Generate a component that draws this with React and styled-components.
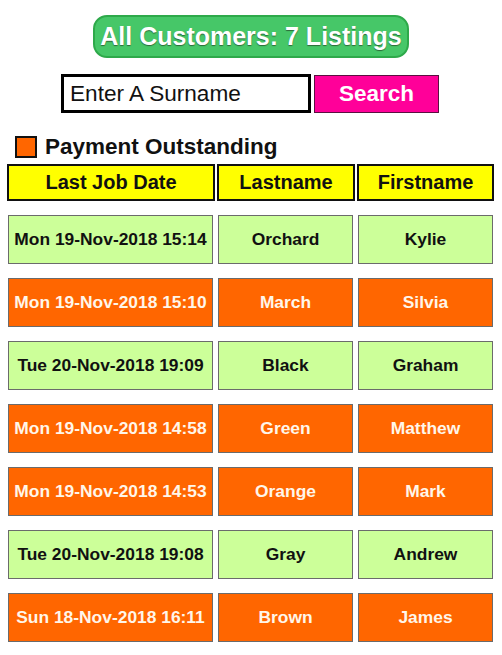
import React, { useState } from 'react';
import styled, { createGlobalStyle } from 'styled-components';

const GlobalStyle = createGlobalStyle`
    body {
        margin: 0;
        background: #ffffff;
        font-family: "Liberation Sans", Arial, sans-serif;
    }
`;

const customers = [
    { date: 'Mon 19-Nov-2018 15:14', last: 'Orchard', first: 'Kylie', owing: false },
    { date: 'Mon 19-Nov-2018 15:10', last: 'March', first: 'Silvia', owing: true },
    { date: 'Tue 20-Nov-2018 19:09', last: 'Black', first: 'Graham', owing: false },
    { date: 'Mon 19-Nov-2018 14:58', last: 'Green', first: 'Matthew', owing: true },
    { date: 'Mon 19-Nov-2018 14:53', last: 'Orange', first: 'Mark', owing: true },
    { date: 'Tue 20-Nov-2018 19:08', last: 'Gray', first: 'Andrew', owing: false },
    { date: 'Sun 18-Nov-2018 16:11', last: 'Brown', first: 'James', owing: true },
];

const Page = styled.div`
    width: 502px;
    padding-top: 15px;
    box-sizing: border-box;
`;

const TitlePill = styled.div`
    width: 316px;
    height: 43px;
    margin: 0 auto;
    box-sizing: border-box;
    border: 2px solid #2ea94a;
    border-radius: 14px;
    background: #46c768;
    color: #ffffff;
    font-size: 25px;
    font-weight: bold;
    display: flex;
    align-items: center;
    justify-content: center;
    text-shadow: 0 1px 1px #2b6a38;
`;

const SearchRow = styled.div`
    display: flex;
    align-items: flex-start;
    gap: 3px;
    margin-top: 16px;
    padding-left: 61px;
`;

const SurnameInput = styled.input`
    width: 250px;
    height: 39px;
    box-sizing: border-box;
    border: 3px solid #000000;
    padding: 0 6px;
    font-family: "Liberation Sans", Arial, sans-serif;
    font-size: 22.6px;
    color: #000000;
    outline: none;
    &::placeholder {
        color: #111111;
        opacity: 1;
    }
`;

const SearchButton = styled.button`
    width: 125px;
    height: 38px;
    margin-top: 1px;
    box-sizing: border-box;
    border: 1px solid #5a1040;
    background: #ff0099;
    color: #ffffff;
    font-family: "Liberation Sans", Arial, sans-serif;
    font-size: 22.5px;
    font-weight: bold;
    padding: 0;
`;

const Legend = styled.div`
    display: flex;
    align-items: center;
    gap: 8px;
    height: 22px;
    line-height: 22px;
    margin-top: 23px;
    padding-left: 15px;
    font-size: 22.5px;
    font-weight: bold;
    color: #111111;
`;

const Swatch = styled.span`
    width: 22px;
    height: 22px;
    box-sizing: border-box;
    border: 2px solid #111111;
    background: #ff6600;
`;

const HeaderGrid = styled.div`
    display: grid;
    grid-template-columns: 208px 138px 137px;
    gap: 2px;
    margin-top: 6px;
    padding-left: 7px;
`;

const HeaderCell = styled.div`
    height: 37px;
    box-sizing: border-box;
    border: 2px solid #111111;
    background: #ffff00;
    color: #111111;
    font-size: 20px;
    font-weight: bold;
    display: flex;
    align-items: center;
    justify-content: center;
`;

const Rows = styled.div`
    display: flex;
    flex-direction: column;
    gap: 14px;
    margin-top: 14px;
    padding-left: 8px;
`;

const Row = styled.div`
    display: grid;
    grid-template-columns: 205px 135px 135px;
    gap: 5px;
`;

const Cell = styled.div`
    height: 49px;
    box-sizing: border-box;
    border: 1px solid #6b6b6b;
    background: ${p => (p.$owing ? '#ff6600' : '#ccff99')};
    color: ${p => (p.$owing ? '#fff6ea' : '#111111')};
    font-size: 17.4px;
    font-weight: bold;
    display: flex;
    align-items: center;
    justify-content: center;
    white-space: nowrap;
`;

const App = () => {
    const [surname, setSurname] = useState('');

    return (
        <>
            <GlobalStyle />
            <Page>
                <TitlePill>All Customers: 7 Listings</TitlePill>
                <SearchRow>
                    <SurnameInput
                        placeholder='Enter A Surname'
                        value={surname}
                        onChange={e => setSurname(e.target.value)}
                    />
                    <SearchButton>Search</SearchButton>
                </SearchRow>
                <Legend>
                    <Swatch />
                    Payment Outstanding
                </Legend>
                <HeaderGrid>
                    <HeaderCell>Last Job Date</HeaderCell>
                    <HeaderCell>Lastname</HeaderCell>
                    <HeaderCell>Firstname</HeaderCell>
                </HeaderGrid>
                <Rows>
                    {customers.map(c => (
                        <Row key={c.date + c.last}>
                            <Cell $owing={c.owing}>{c.date}</Cell>
                            <Cell $owing={c.owing}>{c.last}</Cell>
                            <Cell $owing={c.owing}>{c.first}</Cell>
                        </Row>
                    ))}
                </Rows>
            </Page>
        </>
    );
};

export default App;
